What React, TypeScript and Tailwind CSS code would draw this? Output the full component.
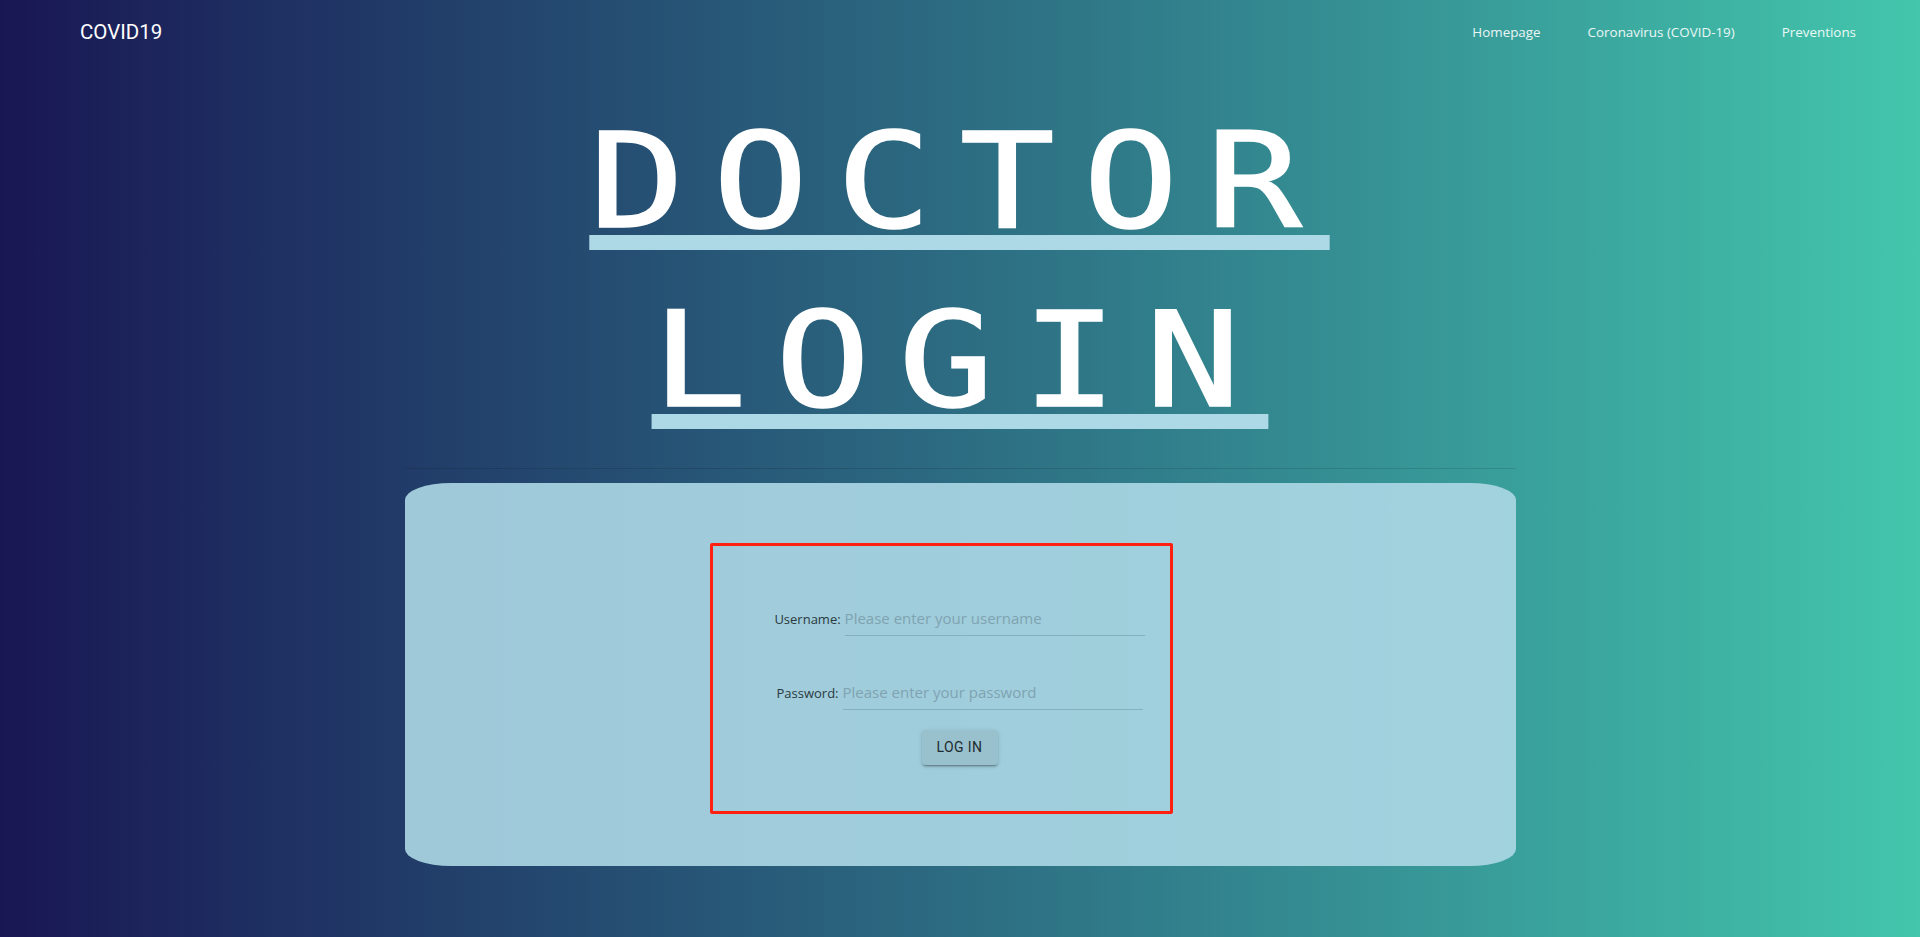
const NAV_LINKS = ['Homepage', 'Coronavirus (COVID-19)', 'Preventions'];

const TITLE = ['DOCTOR', 'LOGIN'];

function Field({ label, placeholder, type }: { label: string; placeholder: string; type: string }) {
  return (
    <label className="flex items-baseline gap-1">
      <span className="text-[13px] text-[#2b3a40]">{label}</span>
      <input
        type={type}
        placeholder={placeholder}
        className="w-[300px] border-b border-[#87b0bf] bg-transparent pt-[4px] pb-[7px] text-[15px] leading-[20px] text-[#2b3a40] outline-none placeholder:text-[#7fa3b1]"
      />
    </label>
  );
}

export default function App() {
  return (
    <div className="min-h-screen bg-linear-to-r from-[#191654] to-[#43c6ac] font-['Open_Sans',sans-serif]">
      {/* Top bar */}
      <header className="flex h-16 items-center justify-between pl-[80px] pr-[64px] pt-[1px]">
        <span className="font-['Roboto',sans-serif] text-[20.5px] text-white">COVID19</span>
        <nav className="flex items-center gap-[47px]">
          {NAV_LINKS.map((link) => (
            <a key={link} href="#" className="text-[13.4px] text-white/90">
              {link}
            </a>
          ))}
        </nav>
      </header>

      {/* Heading */}
      <div className="mt-[64px] flex flex-col items-center gap-[57px] font-['DejaVu_Sans_Mono',monospace] text-white">
        {TITLE.map((word) => (
          <div key={word} className="text-center">
            <span className="inline-block scale-x-[1.2] border-b-[15px] border-[#add8e6] text-[132px] font-normal leading-[107px] tracking-[23.4px] [-webkit-text-stroke:1.5px_white]">
              {word}
            </span>
          </div>
        ))}
      </div>

      <div className="mx-auto mt-[39px] w-[1111px]">
        <hr className="border-black/[0.12]" />

        {/* Card */}
        <div className="mt-[14px] rounded-[46px/17px] bg-[#add8e6]/90 pt-[60px] pb-[52px]">
          <form className="ml-[305px] flex w-[463px] flex-col items-center rounded-[2px] border-[3px] border-[#ff2010] pt-[58px] pb-[46px] pl-[37px]">
            <Field label="Username:" placeholder="Please enter your username" type="text" />
            <div className="mt-[42px]">
              <Field label="Password:" placeholder="Please enter your password" type="password" />
            </div>
            <button
              type="button"
              className="mt-[20px] h-[35px] w-[76px] rounded bg-[#98c1cd] font-['Roboto',sans-serif] text-[14px] font-normal tracking-[0.4px] text-[#1e2b30] shadow-[0_3px_1px_-2px_rgba(0,0,0,0.2),0_2px_2px_0_rgba(0,0,0,0.14),0_1px_5px_0_rgba(0,0,0,0.12)]"
            >
              LOG IN
            </button>
          </form>
        </div>
      </div>
    </div>
  );
}
